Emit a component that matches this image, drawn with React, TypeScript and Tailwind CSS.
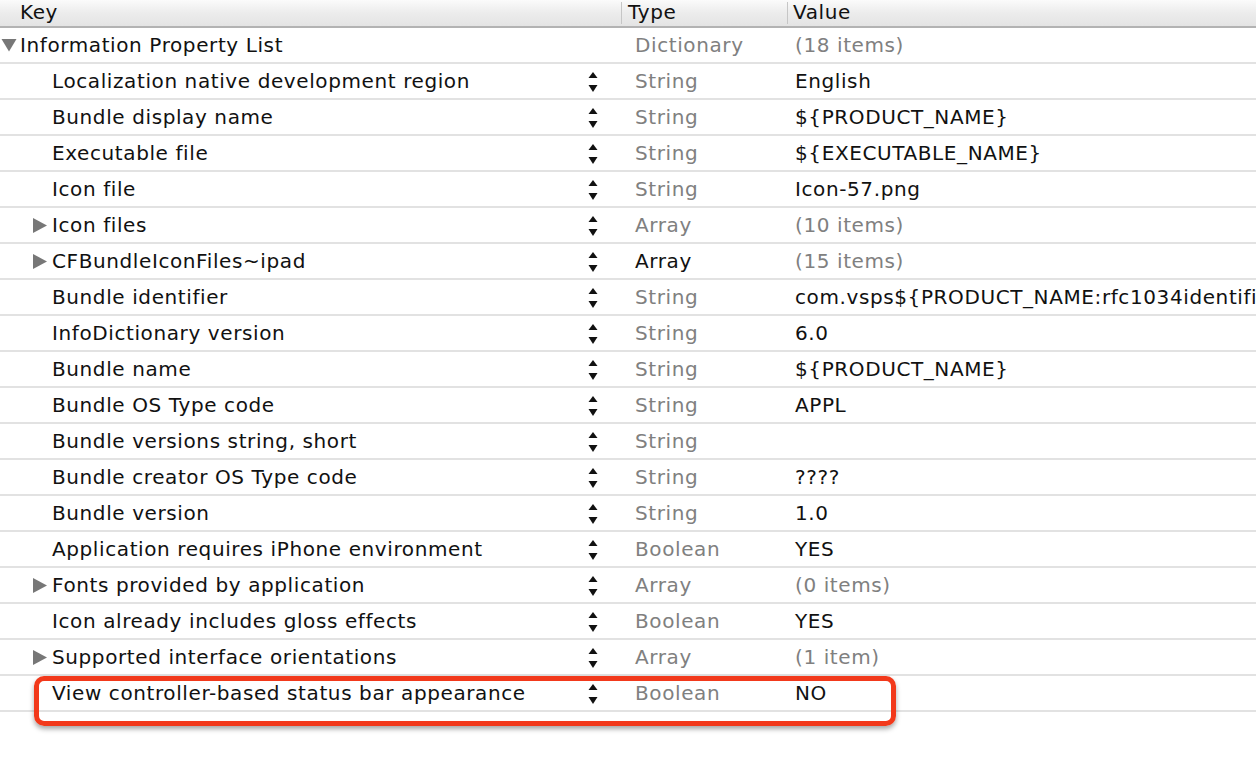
import React from "react";

type Row = {
  key: string;
  type: string;
  value: string;
  level: 0 | 1;
  disclosure?: "open" | "closed";
  typeDark?: boolean;
  valueGray?: boolean;
  stepper?: boolean;
};

const rows: Row[] = [
  { key: "Information Property List", type: "Dictionary", value: "(18 items)", level: 0, disclosure: "open", valueGray: true, stepper: false },
  { key: "Localization native development region", type: "String", value: "English", level: 1 },
  { key: "Bundle display name", type: "String", value: "${PRODUCT_NAME}", level: 1 },
  { key: "Executable file", type: "String", value: "${EXECUTABLE_NAME}", level: 1 },
  { key: "Icon file", type: "String", value: "Icon-57.png", level: 1 },
  { key: "Icon files", type: "Array", value: "(10 items)", level: 1, disclosure: "closed", valueGray: true },
  { key: "CFBundleIconFiles~ipad", type: "Array", value: "(15 items)", level: 1, disclosure: "closed", typeDark: true, valueGray: true },
  { key: "Bundle identifier", type: "String", value: "com.vsps${PRODUCT_NAME:rfc1034identifier}", level: 1 },
  { key: "InfoDictionary version", type: "String", value: "6.0", level: 1 },
  { key: "Bundle name", type: "String", value: "${PRODUCT_NAME}", level: 1 },
  { key: "Bundle OS Type code", type: "String", value: "APPL", level: 1 },
  { key: "Bundle versions string, short", type: "String", value: "", level: 1 },
  { key: "Bundle creator OS Type code", type: "String", value: "????", level: 1 },
  { key: "Bundle version", type: "String", value: "1.0", level: 1 },
  { key: "Application requires iPhone environment", type: "Boolean", value: "YES", level: 1 },
  { key: "Fonts provided by application", type: "Array", value: "(0 items)", level: 1, disclosure: "closed", valueGray: true },
  { key: "Icon already includes gloss effects", type: "Boolean", value: "YES", level: 1 },
  { key: "Supported interface orientations", type: "Array", value: "(1 item)", level: 1, disclosure: "closed", valueGray: true },
  { key: "View controller-based status bar appearance", type: "Boolean", value: "NO", level: 1 },
];

function Disclosure({ open }: { open: boolean }) {
  return open ? (
    <svg width="16" height="14" viewBox="0 0 16 14" className="shrink-0">
      <path d="M0.5 1 L15.5 1 L8 13.5 Z" fill="#777" />
    </svg>
  ) : (
    <svg width="16" height="17" viewBox="0 0 16 17" className="shrink-0">
      <path d="M1 1 L15 8.5 L1 16 Z" fill="#777" />
    </svg>
  );
}

function Stepper() {
  return (
    <svg width="10" height="22" viewBox="0 0 10 22">
      <path d="M5 1 L9.5 7 L0.5 7 Z" fill="#111" />
      <path d="M0.5 14 L9.5 14 L5 21 Z" fill="#111" />
    </svg>
  );
}

export default function App() {
  return (
    <div
      className="relative h-[780px] w-[1256px] overflow-hidden bg-white text-[20px] tracking-[0.6px] text-[#111]"
      style={{ fontFamily: '"DejaVu Sans", "Liberation Sans", sans-serif' }}
    >
      {/* column header */}
      <div className="flex h-[28px] items-end border-b-2 border-[#b3b3b3] bg-gradient-to-b from-[#fbfbfb] via-[#ececec] to-[#e4e4e4] leading-none">
        <div className="w-[621px] pb-[4px] pl-[20px]">Key</div>
        <div className="h-[22px] w-[1px] self-center bg-[#c6c6c6]" />
        <div className="w-[165px] pb-[4px] pl-[6px]">Type</div>
        <div className="h-[22px] w-[1px] self-center bg-[#c6c6c6]" />
        <div className="flex-1 pb-[4px] pl-[5px]">Value</div>
      </div>

      {rows.map((r) => (
        <div
          key={r.key}
          className="flex h-[36px] items-center border-b-2 border-[#e2e2e2] whitespace-nowrap"
        >
          <div
            className={`flex w-[578px] items-center ${
              r.level === 0 ? "pl-[1px]" : "pl-[32px]"
            }`}
          >
            <div className={`flex items-center ${r.level === 0 ? "w-[19px]" : "w-[20px]"}`}>
              {r.disclosure && <Disclosure open={r.disclosure === "open"} />}
            </div>
            <span>{r.key}</span>
          </div>
          <div className="flex w-[44px] items-center pl-[10px] pt-[1px]">
            {r.stepper !== false && <Stepper />}
          </div>
          <div className={`w-[166px] pl-[13px] ${r.typeDark ? "text-[#111]" : "text-[#808080]"}`}>
            {r.type}
          </div>
          <div className={`flex-1 overflow-hidden pl-[7px] ${r.valueGray ? "text-[#808080]" : "text-[#111]"}`}>
            {r.value}
          </div>
        </div>
      ))}

      {/* highlight annotation */}
      <div className="pointer-events-none absolute left-[34px] top-[676px] h-[50px] w-[862px] rounded-[10px] border-[5px] border-[#f2391b] shadow-[0_3px_5px_rgba(0,0,0,0.35)]" />
    </div>
  );
}
